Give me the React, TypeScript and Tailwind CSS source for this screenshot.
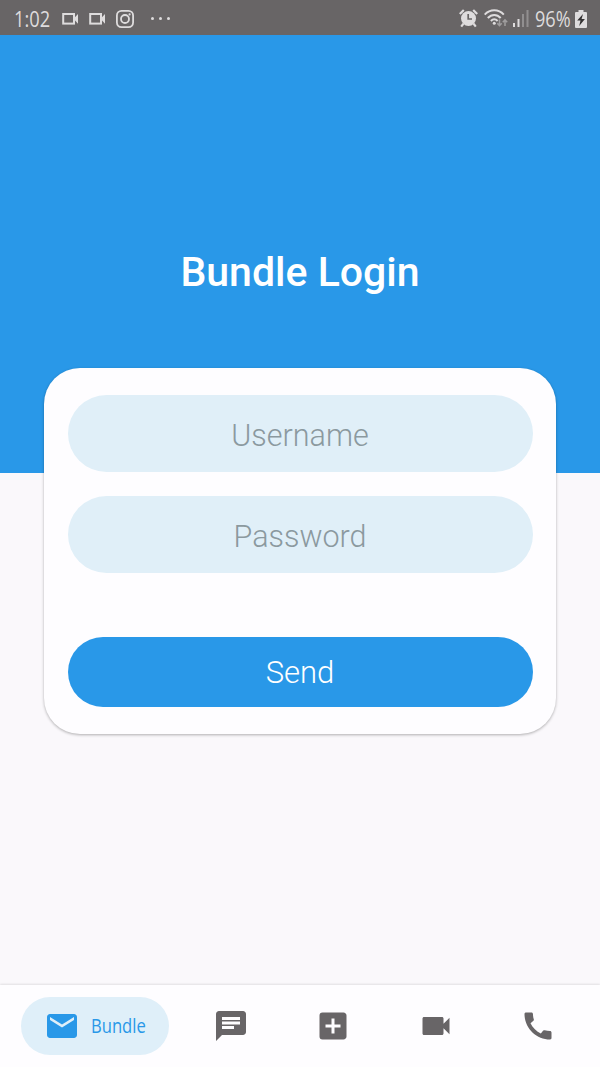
import React from "react";
import { MdAddBox, MdCall, MdChat, MdEmail, MdVideocam } from "react-icons/md";

function CameraOutline() {
  return (
    <svg width="17" height="12" viewBox="0 0 17 12" fill="none">
      <rect x="1.2" y="1" width="10.8" height="9.6" stroke="#dedcdd" strokeWidth="2" />
      <path d="M11.5 5.8 16 1v9.8z" fill="#dedcdd" />
    </svg>
  );
}

function InstagramIcon() {
  return (
    <svg width="18" height="18" viewBox="0 0 18 18" fill="none" stroke="#dedcdd" strokeWidth="1.8">
      <rect x="0.9" y="0.9" width="16.2" height="16.2" rx="4.6" />
      <circle cx="9" cy="9" r="4" />
      <circle cx="13.6" cy="4.4" r="1.1" fill="#dedcdd" stroke="none" />
    </svg>
  );
}

function AlarmIcon() {
  return (
    <svg width="19" height="19" viewBox="0 0 19 19" fill="none">
      <circle cx="9.5" cy="9.5" r="7.5" fill="#dedcdd" />
      <path d="M0.8 5 4.8 1M18.200 5l-4-4M4.400 14.800 2.200 17.600M14.600 14.800l2.200 2.800" stroke="#dedcdd" strokeWidth="2.200" />
      <path d="M9.200 5v5h3.800" stroke="#686566" strokeWidth="1.700" />
    </svg>
  );
}

function WifiIcon() {
  return (
    <svg width="25" height="19" viewBox="0 0 25 19" fill="none">
      <g stroke="#dedcdd" strokeWidth="2">
        <path d="M0.700 5.600C6 -0.100 14.500 -0.100 19.800 5.600" />
        <path d="M3.800 9C7.600 4.900 12.900 4.900 16.700 9" />
        <path d="M6.900 12C9 9.700 11.500 9.700 13.600 12" />
      </g>
      <circle cx="10.250" cy="14.300" r="1.500" fill="#dedcdd" />
      <path d="M15.500 10.500v6M13.300 14.300l2.200 2.400 2.200-2.400M21 17v-6M18.800 13.200l2.200-2.400 2.200 2.400" stroke="#a09e9f" strokeWidth="1.500" />
    </svg>
  );
}

function SignalIcon() {
  return (
    <svg width="16" height="17" viewBox="0 0 16 17">
      <path d="M0 13h2v4H0zM4.500 9h2v8h-2z" fill="#dedcdd" />
      <path d="M9 4h2v13H9zM13.500 0h2v17h-2z" fill="#918f90" />
    </svg>
  );
}

function BatteryIcon() {
  return (
    <svg width="12" height="18" viewBox="0 0 12 18">
      <path d="M3.500 0h5v2H11q1 0 1 1v14q0 1-1 1H1q-1 0-1-1V3q0-1 1-1h2.500z" fill="#dedcdd" />
      <path d="M8 4 2.200 10.500h3.300L4.200 16l5.700-6.900H6.600z" fill="#343233" />
    </svg>
  );
}

function StatusBar() {
  return (
    <div className="flex h-[35px] shrink-0 items-center bg-[#686566] pt-[2px] pl-[14px] pr-[13px] text-[#dedcdd]">
      <div className="w-[48px] shrink-0">
        <span className="inline-block origin-left scale-x-[0.87] font-['Open_Sans',sans-serif] text-[21px] leading-[30px]">1:02</span>
      </div>
      <div className="flex items-center gap-[10px]">
        <CameraOutline />
        <CameraOutline />
        <InstagramIcon />
      </div>
      <div className="ml-[17px] flex gap-[5px]">
        <span className="size-[3px] rounded-full bg-[#dedcdd]" />
        <span className="size-[3px] rounded-full bg-[#dedcdd]" />
        <span className="size-[3px] rounded-full bg-[#dedcdd]" />
      </div>
      <div className="ml-auto flex items-center">
        <AlarmIcon />
        <div className="ml-[6px]"><WifiIcon /></div>
        <div className="ml-[4px]"><SignalIcon /></div>
        <div className="ml-[6px] w-[40px]">
          <span className="inline-block origin-left scale-x-[0.86] font-['Open_Sans',sans-serif] text-[21px] leading-[30px]">96%</span>
        </div>
        <BatteryIcon />
      </div>
    </div>
  );
}

const inputClass =
  "h-[77px] w-full rounded-[39px] bg-[#e0eff8] pt-[4px] text-center font-['Roboto',sans-serif] text-[30.500px] font-light outline-none placeholder:text-[#8b999f] placeholder:opacity-100";

export default function App() {
  return (
    <div className="flex h-[1067px] w-[600px] flex-col overflow-hidden bg-[#faf8fb] font-['Roboto',sans-serif]">
      <StatusBar />
      <header className="h-[438px] shrink-0 bg-[#2998e8] pt-[212px] text-center">
        <h1 className="text-[41px] leading-[50px] font-medium text-white">Bundle Login</h1>
      </header>
      <main className="flex-1">
        <form
          className="relative mx-[44px] -mt-[105px] flex h-[366px] flex-col rounded-[36px] bg-[#fefdff] px-[23.500px] pt-[27px] shadow-[0_1px_3px_rgba(0,0,0,0.3)]"
          onSubmit={(event) => event.preventDefault()}
        >
          <input className={inputClass} placeholder="Username" aria-label="Username" />
          <div className="h-[24px]" />
          <input type="password" className={inputClass} placeholder="Password" aria-label="Password" />
          <button className="mt-[64px] h-[70px] w-full rounded-[35px] bg-[#2998e8] pt-[3px] text-[31px] font-light text-white">
            Send
          </button>
        </form>
      </main>
      <nav className="flex h-[82px] shrink-0 items-center bg-[#fefdff] pl-[21px] pr-[11px] text-[#686567] shadow-[0_-1px_2px_rgba(0,0,0,0.1)]">
        <button className="flex h-[58px] w-[148px] shrink-0 items-center rounded-full bg-[#dfeff9] pl-[22.500px] text-[#2998e8]">
          <MdEmail size={36} />
          <span className="ml-[11.500px] inline-block origin-left scale-x-[0.83] font-['Open_Sans',sans-serif] text-[20px]">Bundle</span>
        </button>
        <div className="ml-[11px] flex flex-1 [&>button]:flex [&>button]:flex-1 [&>button]:justify-center">
          <button aria-label="Chat"><MdChat size={36} /></button>
          <button aria-label="Add"><MdAddBox size={36} /></button>
          <button aria-label="Video"><MdVideocam size={36} /></button>
          <button aria-label="Call"><MdCall size={36} /></button>
        </div>
      </nav>
    </div>
  );
}
